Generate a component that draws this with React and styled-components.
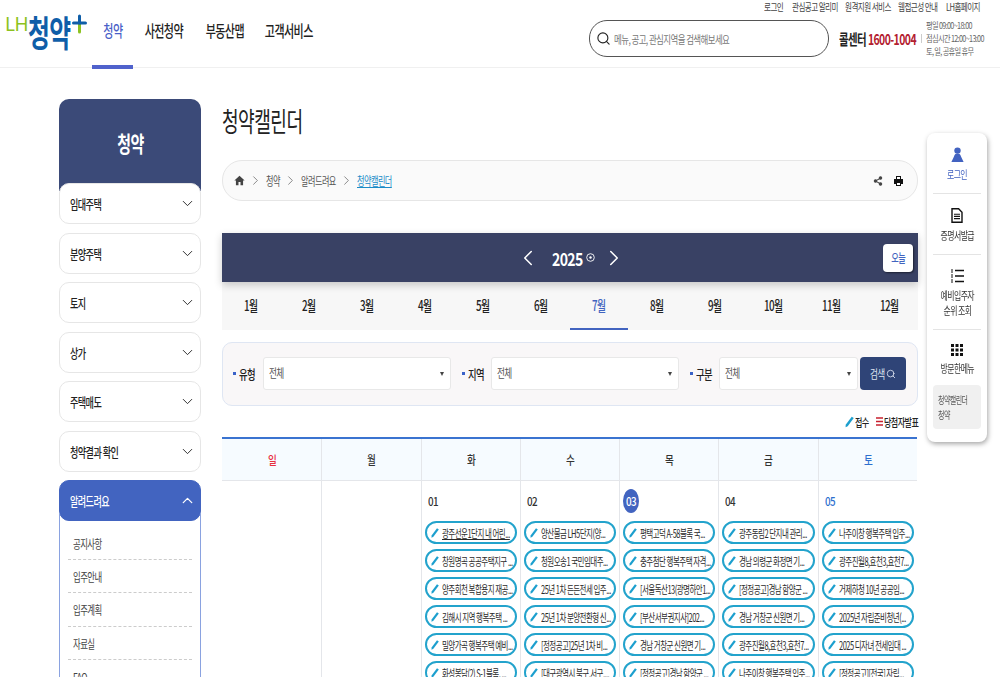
import React from "react";
import styled, { createGlobalStyle } from "styled-components";
import { ChevronDown, ChevronUp, ChevronLeft, ChevronRight, Search, Share2 } from "lucide-react";

const GlobalStyle = createGlobalStyle`
  html, body {
    margin: 0;
    padding: 0;
    height: 677px;
    overflow: hidden;
    background: #fff;
  }
  body {
    font-family: "Noto Sans CJK KR", "Noto Sans", sans-serif;
    letter-spacing: -0.05em;
    color: #222;
  }
  * { box-sizing: border-box; }
`;

const utilLinks = [
  { label: "로그인", width: 21 },
  { label: "관심공고 알리미", width: 46 },
  { label: "원격지원 서비스", width: 46 },
  { label: "웹접근성 안내", width: 41 },
  { label: "LH홈페이지", width: 34 },
];
const navLinks = [
  { label: "청약", width: 41 },
  { label: "사전청약", width: 60 },
  { label: "부동산맵", width: 59 },
  { label: "고객서비스", width: 68 },
];
const sideLinks = ["임대주택", "분양주택", "토지", "상가", "주택매도", "청약결과 확인"];
const subLinks = ["공지사항", "입주안내", "입주계획", "자료실", "FAQ"];
const months = ["1월", "2월", "3월", "4월", "5월", "6월", "7월", "8월", "9월", "10월", "11월", "12월"];
const weekDays = ["일", "월", "화", "수", "목", "금", "토"];

const days = [
  {
    date: "01",
    items: ["광주선운1단지 내 어린...", "창원명곡 공공주택지구 ...", "양주회천 복합용지 재공...", "김해시 지역 행복주택 ...", "밀양가곡 행복주택 예비...", "화성봉담(2) S-1블록, ..."],
  },
  {
    date: "02",
    items: ["양산물금 LH5단지(양...", "청원오송1 국민임대주...", "25년 1차 든든전세 입주...", "25년 1차 분양전환형 신...", "[정정공고]25년 1차 비...", "[대구광역시 북구,서구,..."],
  },
  {
    date: "03",
    today: true,
    items: ["평택고덕 A-58블록 국...", "충주첨단 행복주택 자격...", "[서울독산13(광명하안1...", "[부산서부권지사]202...", "경남 거창군 신원면 기...", "[정정공고]경남 함양군 ..."],
  },
  {
    date: "04",
    items: ["광주동림2 단지내 관리...", "경남 의령군 화정면 기...", "[정정공고]경남 함양군 ...", "경남 거창군 신원면 기...", "광주진월8,효천3,효천7...", "나주이창 행복주택 입주..."],
  },
  {
    date: "05",
    saturday: true,
    items: ["나주이창 행복주택 입주...", "광주진월8,효천3,효천7...", "거제하청 10년 공공임...", "2025년 자립준비청년(...", "2025 디자녀 전세임대 ...", "[정정공고][전국] 자립..."],
  },
];

const Pencil = ({ width = 8, height = 10 }) => (
  <svg width={width} height={height} viewBox="0 0 8 10" style={{ flexShrink: 0 }}>
    <path d="M6 0.300 7.800 1.500 2.400 8.700 0.500 9.700 0.600 7.500Z" fill="#1c9fce" />
  </svg>
);

const App = () => {
  return (
    <Page>
      <GlobalStyle />
      <Header>
        <Logo>
          <LogoLH>LH</LogoLH>
          <LogoName>
            <Narrow $x={0.66}>청약</Narrow>
          </LogoName>
          <LogoPlus>
            <svg width="15" height="20" viewBox="0 0 15 20">
              <path d="M7.500 10v8" stroke="#8cc220" strokeWidth="3" strokeLinecap="round" />
              <path d="M1.500 9h12" stroke="#0f5ea8" strokeWidth="3" strokeLinecap="round" />
              <path d="M7.500 2v7" stroke="#0f5ea8" strokeWidth="3" strokeLinecap="round" />
            </svg>
          </LogoPlus>
        </Logo>
        <Nav>
          {navLinks.map((link, i) => (
            <NavItem key={link.label} $width={link.width} $active={i === 0}>
              <Narrow $x={0.69} $center>{link.label}</Narrow>
            </NavItem>
          ))}
        </Nav>
        <HeaderRight>
          <UtilRow>
            {utilLinks.map((link) => (
              <UtilLink key={link.label} $width={link.width}>
                <Narrow $x={0.72}>{link.label}</Narrow>
              </UtilLink>
            ))}
          </UtilRow>
          <SearchRow>
            <SearchBox>
              <Search size={15} color="#222" strokeWidth={1.8} />
              <Narrow $x={0.735}>메뉴, 공고, 관심지역을 검색해보세요</Narrow>
            </SearchBox>
            <CallCenter>
              <Narrow $x={0.695}>
                콜센터 <em>1600-1004</em>
              </Narrow>
            </CallCenter>
            <Hours>
              <Narrow $x={0.8}>평일 09:00~18:00</Narrow>
              <Narrow $x={0.8}>점심시간 12:00~13:00</Narrow>
              <Narrow $x={0.8}>토, 일, 공휴일 휴무</Narrow>
            </Hours>
          </SearchRow>
        </HeaderRight>
      </Header>

      <Main>
        <Sidebar>
          <SideTitle>
            <Narrow $x={0.68} $center>청약</Narrow>
          </SideTitle>
          <SideList>
            {sideLinks.map((link) => (
              <SideItem key={link}>
                <Narrow>{link}</Narrow>
                <ChevronDown size={17} strokeWidth={1.3} />
              </SideItem>
            ))}
            <SideGroup>
              <SideItem $active>
                <Narrow>알려드려요</Narrow>
                <ChevronUp size={17} strokeWidth={1.8} />
              </SideItem>
              <SubList>
                {subLinks.map((link) => (
                  <SubItem key={link}>
                    <Narrow>{link}</Narrow>
                  </SubItem>
                ))}
              </SubList>
            </SideGroup>
          </SideList>
        </Sidebar>

        <Content>
          <Title>
            <Narrow $x={0.67}>청약캘린더</Narrow>
          </Title>
          <Breadcrumb>
            <Crumbs>
              <svg width="11" height="11" viewBox="0 0 12 12">
                <path d="M6 .8 .4 6h1.700v5.200h2.800V7.600h2.200v3.600h2.800V6h1.700Z" fill="#444" />
              </svg>
              <ChevronRight size={15} color="#666" strokeWidth={1.2} />
              <Crumb $width={14}><Narrow $x={0.68}>청약</Narrow></Crumb>
              <ChevronRight size={15} color="#666" strokeWidth={1.2} />
              <Crumb $width={35}><Narrow $x={0.68}>알려드려요</Narrow></Crumb>
              <ChevronRight size={15} color="#666" strokeWidth={1.2} />
              <Crumb $width={35} $current><Narrow $x={0.68}>청약캘린더</Narrow></Crumb>
            </Crumbs>
            <CrumbTools>
              <Share2 size={10} color="#444" fill="#444" strokeWidth={2.5} />
              <svg width="9" height="10" viewBox="0 0 9 10">
                <path d="M2 0h5v3h2v5H7v2H2V8H0V3h2Z" fill="#111" />
                <path d="M3 1h3v2H3ZM3 7h3v2H3Z" fill="#fff" />
              </svg>
            </CrumbTools>
          </Breadcrumb>

          <YearBar>
            <YearNav>
              <ChevronLeft size={26} color="#fff" strokeWidth={1.4} />
              <YearLabel>
                <YearText><Narrow $x={0.78}>2025</Narrow></YearText>
                <svg width="9" height="9" viewBox="0 0 9 9">
                  <circle cx="4.500" cy="4.500" r="3.800" fill="none" stroke="#fff" strokeWidth="0.9" />
                  <circle cx="4.500" cy="4.500" r="1.200" fill="#fff" />
                </svg>
              </YearLabel>
              <ChevronRight size={26} color="#fff" strokeWidth={1.4} />
            </YearNav>
            <TodayButton><Narrow $x={0.68} $center>오늘</Narrow></TodayButton>
          </YearBar>
          <MonthTabs>
            {months.map((month, i) => (
              <MonthTab key={month} $active={i === 6}>
                <Narrow $x={0.7} $center>{month}</Narrow>
              </MonthTab>
            ))}
          </MonthTabs>

          <FilterBox>
            <FilterLabel><Narrow $x={0.72}>유형</Narrow></FilterLabel>
            <SelectBox $width={188}><Narrow $x={0.72}>전체</Narrow></SelectBox>
            <FilterLabel><Narrow $x={0.72}>지역</Narrow></FilterLabel>
            <SelectBox $width={188}><Narrow $x={0.72}>전체</Narrow></SelectBox>
            <FilterLabel><Narrow $x={0.72}>구분</Narrow></FilterLabel>
            <SelectBox $width={139}><Narrow $x={0.72}>전체</Narrow></SelectBox>
            <SearchButton>
              <SearchLabel><Narrow $x={0.72}>검색</Narrow></SearchLabel>
              <Search size={10} strokeWidth={2} />
            </SearchButton>
          </FilterBox>

          <Legend>
            <LegendItem $width={24}>
              <Pencil width={9} height={12} />
              <Narrow $x={0.7}>접수</Narrow>
            </LegendItem>
            <LegendItem $width={42}>
              <svg width="7" height="9" viewBox="0 0 7 9" style={{ flexShrink: 0 }}>
                <path d="M0 1h7M0 4.500h7M0 8h7" stroke="#c8202f" strokeWidth="1.4" />
              </svg>
              <Narrow $x={0.7}>당첨자발표</Narrow>
            </LegendItem>
          </Legend>

          <Calendar>
            <WeekRow>
              {weekDays.map((day, i) => (
                <WeekCell key={day} $color={i === 0 ? "#e8303f" : i === 6 ? "#2d6fce" : "#333"}>
                  <Narrow $x={0.8} $center>{day}</Narrow>
                </WeekCell>
              ))}
            </WeekRow>
            <DayRow>
              <DayCell />
              <DayCell />
              {days.map((day) => (
                <DayCell key={day.date}>
                  <DateNum $today={day.today} $saturday={day.saturday}>
                    <Narrow $x={0.82} $center>{day.date}</Narrow>
                  </DateNum>
                  <PillList>
                    {day.items.map((item, i) => (
                      <Pill key={item} $underline={day.date === "01" && i === 0}>
                        <Pencil />
                        <Narrow $x={0.65}>{item}</Narrow>
                      </Pill>
                    ))}
                  </PillList>
                </DayCell>
              ))}
            </DayRow>
          </Calendar>
        </Content>
      </Main>

      <QuickMenu>
        <QuickItem $active>
          <svg width="13" height="15" viewBox="0 0 13 15">
            <circle cx="6.500" cy="3.600" r="3.200" fill="#4262c0" />
            <path d="M6.500 6.500c2.200 0 3 1.200 3.500 3L12.600 15H.4L3 9.500c.5-1.800 1.300-3 3.500-3Z" fill="#4262c0" />
          </svg>
          <Narrow $x={0.72} $center>로그인</Narrow>
        </QuickItem>
        <QuickItem>
          <svg width="12" height="15" viewBox="0 0 12 15">
            <path d="M1 .8h6.600L11 4.200v10H1Z" fill="#fff" stroke="#111" strokeWidth="1.4" />
            <path d="M3 6.200h6M3 8.400h6M3 10.600h6" stroke="#111" strokeWidth="1.1" />
          </svg>
          <Narrow $x={0.72} $center>증명서발급</Narrow>
        </QuickItem>
        <QuickItem>
          <svg width="13" height="14" viewBox="0 0 13 14">
            <path d="M4 1.500h9M4 7h9M4 12.500h9" stroke="#111" strokeWidth="1.5" />
            <path d="M0 1h2M0 3h2M0 6h2M0 8h2M0 11h2M0 13h2" stroke="#111" strokeWidth="1" />
          </svg>
          <Narrow $x={0.72} $center>예비입주자</Narrow>
          <Narrow $x={0.72} $center>순위 조회</Narrow>
        </QuickItem>
        <QuickItem $last>
          <svg width="12" height="12" viewBox="0 0 12 12">
            <path d="M0 0h3v3H0zM4.500 0h3v3h-3zM9 0h3v3H9zM0 4.500h3v3H0zM4.500 4.500h3v3h-3zM9 4.500h3v3H9zM0 9h3v3H0zM4.500 9h3v3h-3zM9 9h3v3H9z" fill="#111" />
          </svg>
          <Narrow $x={0.72} $center>방문한메뉴</Narrow>
        </QuickItem>
        <RecentBox>
          <Narrow $x={0.7}>청약캘린더</Narrow>
          <Narrow $x={0.7}>청약</Narrow>
        </RecentBox>
      </QuickMenu>
    </Page>
  );
};

const Page = styled.div`
  width: 1000px;
  height: 677px;
  overflow: hidden;
`;

// the Korean text in the shot is squeezed sideways, no installed font is that narrow
const Narrow = styled.span`
  display: inline-block;
  flex-shrink: 0;
  white-space: nowrap;
  transform: scaleX(${(p) => p.$x || 0.7});
  transform-origin: ${(p) => (p.$center ? "center" : "left center")};
`;

const Header = styled.header`
  height: 68px;
  display: flex;
  border-bottom: 1px solid #f0f0f0;
`;

const Logo = styled.div`
  width: 92px;
  flex-shrink: 0;
  display: flex;
  align-items: flex-start;
  padding: 5px 0 0 5px;
`;

const LogoLH = styled.span`
  width: 23px;
  flex-shrink: 0;
  font-family: "Noto Sans", sans-serif;
  font-size: 19px;
  line-height: 24px;
  margin-top: 7px;
  letter-spacing: -0.03em;
  color: #8cc220;
`;

const LogoName = styled.span`
  width: 44px;
  flex-shrink: 0;
  font-size: 36px;
  font-weight: 700;
  line-height: 52px;
  color: #0f5ea8;
  white-space: nowrap;
`;

const LogoPlus = styled.span`
  margin-top: 9px;
`;

const Nav = styled.nav`
  display: flex;
  gap: 1px;
`;

const NavItem = styled.div`
  width: ${(p) => p.$width}px;
  height: 69px;
  display: flex;
  justify-content: center;
  padding-top: 18px;
  font-size: 16px;
  line-height: 24px;
  font-weight: 500;
  color: ${(p) => (p.$active ? "#4a5fc8" : "#222")};
  border-bottom: 4px solid ${(p) => (p.$active ? "#5062cc" : "transparent")};
`;

const HeaderRight = styled.div`
  margin-left: auto;
  width: 411px;
  display: flex;
  flex-direction: column;
`;

const UtilRow = styled.div`
  display: flex;
  justify-content: flex-end;
  gap: 7px;
  padding: 0 20px 0 0;
  height: 19px;
  font-size: 10.5px;
  line-height: 14px;
  color: #444;
`;

const UtilLink = styled.span`
  width: ${(p) => p.$width}px;
`;

const SearchRow = styled.div`
  display: flex;
  align-items: center;
`;

const SearchBox = styled.div`
  width: 240px;
  height: 37px;
  flex-shrink: 0;
  border: 1px solid #555;
  border-radius: 18px;
  display: flex;
  align-items: center;
  gap: 3px;
  padding-left: 6px;
  font-size: 11.5px;
  color: #777;
`;

const CallCenter = styled.div`
  margin-left: 10px;
  width: 82px;
  flex-shrink: 0;
  font-size: 15px;
  font-weight: 700;
  color: #222;

  em {
    font-style: normal;
    color: #b3202f;
  }
`;

const Hours = styled.div`
  display: flex;
  flex-direction: column;
  padding-left: 5px;
  position: relative;
  font-size: 9px;
  line-height: 13px;
  color: #666;

  &::before {
    content: "";
    position: absolute;
    left: 0;
    top: 15px;
    height: 9px;
    border-left: 1px solid #ccc;
  }
`;

const Main = styled.main`
  display: flex;
  gap: 21px;
  padding: 31px 0 0 59px;
`;

const Sidebar = styled.aside`
  width: 142px;
  flex-shrink: 0;
`;

const SideTitle = styled.div`
  height: 92px;
  padding-top: 28px;
  border-radius: 10px 10px 0 0;
  background: #3b4a78;
  color: #fff;
  display: flex;
  justify-content: center;
  align-items: flex-start;
  font-size: 22px;
  line-height: 30px;
  font-weight: 700;
`;

const SideList = styled.div`
  margin-top: -8px;
  display: flex;
  flex-direction: column;
  gap: 8.5px;
`;

const SideGroup = styled.div``;

const SideItem = styled.div`
  height: 41px;
  border-radius: 10px;
  border: 1px solid ${(p) => (p.$active ? "#4264c0" : "#e6e6e6")};
  background: ${(p) => (p.$active ? "#4264c0" : "#fff")};
  color: ${(p) => (p.$active ? "#fff" : "#222")};
  display: flex;
  align-items: center;
  justify-content: space-between;
  padding: 0 4px 0 10px;
  font-size: 13px;
  font-weight: 500;
`;

const SubList = styled.div`
  margin-top: -8px;
  padding: 14px 8px 0;
  border: 1px solid #8aa2e0;
  border-top: none;
`;

const SubItem = styled.div`
  height: 33.2px;
  padding: 7px 0 0 5px;
  font-size: 12px;
  line-height: 20px;
  color: #444;
  border-bottom: 1px dashed #ccc;
`;

const Content = styled.div`
  width: 696px;
  flex-shrink: 0;
`;

const Title = styled.h1`
  margin: 0;
  height: 61px;
  padding-top: 2px;
  font-size: 27px;
  line-height: 40px;
  font-weight: 400;
  color: #222;
`;

const Breadcrumb = styled.div`
  height: 41px;
  border: 1px solid #e6e6e6;
  border-radius: 20px;
  background: #fafafa;
  display: flex;
  align-items: center;
  justify-content: space-between;
  padding: 0 14px 0 11px;
  font-size: 12px;
`;

const Crumbs = styled.div`
  display: flex;
  align-items: center;
  gap: 3px;
`;

const Crumb = styled.span`
  width: ${(p) => p.$width}px;
  color: ${(p) => (p.$current ? "#1a8cc8" : "#555")};
  text-decoration: ${(p) => (p.$current ? "underline" : "none")};
  span {
    text-decoration: inherit;
  }
`;

const CrumbTools = styled.div`
  display: flex;
  align-items: center;
  gap: 11px;
`;

const YearBar = styled.div`
  margin-top: 32px;
  height: 49px;
  background: #394164;
  box-shadow: 0 3px 8px rgba(0, 0, 0, 0.2);
  display: flex;
  align-items: center;
  justify-content: flex-end;
  position: relative;
  padding-right: 5px;
`;

const YearNav = styled.div`
  position: absolute;
  left: 293px;
  width: 112px;
  display: flex;
  align-items: center;
  justify-content: space-between;
`;

const YearLabel = styled.div`
  display: flex;
  align-items: center;
  gap: 4px;
  margin-left: 4px;
  color: #fff;
`;

const YearText = styled.div`
  width: 30px;
  font-size: 18px;
  font-weight: 700;
`;

const TodayButton = styled.div`
  width: 30px;
  height: 28px;
  border-radius: 4px;
  background: #fff;
  box-shadow: 1px 1px 2px rgba(0, 0, 0, 0.5);
  color: #4264c0;
  font-size: 12px;
  font-weight: 500;
  display: flex;
  align-items: center;
  justify-content: center;
`;

const MonthTabs = styled.div`
  display: grid;
  grid-template-columns: repeat(12, 1fr);
  height: 48px;
  background: #f7f7f7;
`;

const MonthTab = styled.div`
  display: flex;
  align-items: center;
  justify-content: center;
  font-size: 14px;
  font-weight: 500;
  color: ${(p) => (p.$active ? "#4264c0" : "#222")};
  border-bottom: 2px solid ${(p) => (p.$active ? "#4264c0" : "transparent")};
`;

const FilterBox = styled.div`
  margin-top: 12px;
  height: 64px;
  border: 1px solid #dfe6f3;
  border-radius: 10px;
  background: #f9f7f8;
  display: flex;
  align-items: center;
  padding: 0 0 1px 10px;
`;

const FilterLabel = styled.div`
  width: 30px;
  flex-shrink: 0;
  font-size: 13px;
  font-weight: 500;
  padding-left: 6px;
  position: relative;

  &::before {
    content: "";
    position: absolute;
    left: 0;
    top: 8px;
    width: 3px;
    height: 3px;
    background: #3a62c8;
  }

  &:not(:first-child) {
    margin-left: 11px;
    width: 29px;
  }
`;

const SelectBox = styled.div`
  width: ${(p) => p.$width}px;
  height: 33px;
  flex-shrink: 0;
  border: 1px solid #e8e8e8;
  border-radius: 3px;
  background: #fff;
  display: flex;
  align-items: center;
  padding: 0 0 2px 5px;
  font-size: 12px;
  color: #555;
  position: relative;

  &::after {
    content: "";
    position: absolute;
    right: 6px;
    top: 14px;
    border-left: 2.5px solid transparent;
    border-right: 2.5px solid transparent;
    border-top: 4px solid #444;
  }
`;

const SearchButton = styled.div`
  margin-left: 2px;
  width: 46px;
  height: 33px;
  flex-shrink: 0;
  border-radius: 4px;
  background: #2f4477;
  color: #dfe5f2;
  font-size: 12px;
  display: flex;
  align-items: center;
  justify-content: center;
  gap: 1px;
`;

const SearchLabel = styled.span`
  width: 15px;
`;

const Legend = styled.div`
  height: 31px;
  display: flex;
  align-items: center;
  justify-content: flex-end;
  gap: 7px;
  font-size: 11.5px;
  font-weight: 500;
`;

const LegendItem = styled.div`
  width: ${(p) => p.$width}px;
  flex-shrink: 0;
  display: flex;
  align-items: center;
  gap: 1px;
`;

const Calendar = styled.div`
  width: 695px;
  border-top: 2px solid #3a73d0;
`;

const WeekRow = styled.div`
  display: grid;
  grid-template-columns: repeat(7, 1fr);
  height: 42px;
  background: #f6fbff;
  border-bottom: 1px solid #e4e6ea;
`;

const WeekCell = styled.div`
  display: flex;
  align-items: center;
  justify-content: center;
  font-size: 12px;
  font-weight: 500;
  color: ${(p) => p.$color};
  border-left: 1px solid #e4e6ea;

  &:first-child {
    border-left: none;
  }
`;

const DayRow = styled.div`
  display: grid;
  grid-template-columns: repeat(7, 1fr);
`;

const DayCell = styled.div`
  min-width: 0;
  height: 260px;
  padding: 8px 3px 0;
  border-left: 1px solid #e4e6ea;

  &:first-child {
    border-left: none;
  }
`;

const DateNum = styled.div`
  width: 16px;
  height: 24px;
  padding-bottom: 1px;
  border-radius: 50%;
  display: flex;
  align-items: center;
  justify-content: center;
  font-size: 12px;
  font-weight: 500;
  color: ${(p) => (p.$today ? "#fff" : p.$saturday ? "#2d6fce" : "#333")};
  background: ${(p) => (p.$today ? "#4264c0" : "transparent")};
`;

const PillList = styled.div`
  margin-top: 8px;
  display: flex;
  flex-direction: column;
  gap: 5px;
`;

const Pill = styled.div`
  height: 23px;
  border: 2px solid #23a3cc;
  border-radius: 12px;
  display: flex;
  align-items: center;
  gap: 3px;
  padding: 0 3px 0 4px;
  font-size: 11.5px;
  color: #2a2a2a;
  background: #fff;

  span {
    text-decoration: ${(p) => (p.$underline ? "underline" : "none")};
  }
`;

const QuickMenu = styled.aside`
  position: fixed;
  left: 927px;
  top: 133px;
  width: 60px;
  height: 309px;
  background: #fff;
  border-radius: 8px;
  box-shadow: 1px 2px 5px rgba(0, 0, 0, 0.35);
  padding: 0 6px;
  display: flex;
  flex-direction: column;
`;

const QuickItem = styled.div`
  display: flex;
  flex-direction: column;
  align-items: center;
  padding: 14px 0 ${(p) => (p.$last ? "9px" : "11px")};
  border-bottom: ${(p) => (p.$last ? "none" : "1px solid #e4e4e4")};
  font-size: 11px;
  line-height: 15px;
  color: ${(p) => (p.$active ? "#4262c0" : "#333")};

  svg {
    margin-bottom: 5px;
  }
`;

const RecentBox = styled.div`
  height: 44px;
  border-radius: 4px;
  background: #f0f0f0;
  padding: 7px 5px;
  display: flex;
  flex-direction: column;
  align-items: flex-start;
  font-size: 10px;
  line-height: 15px;
  color: #555;
`;

export default App;
